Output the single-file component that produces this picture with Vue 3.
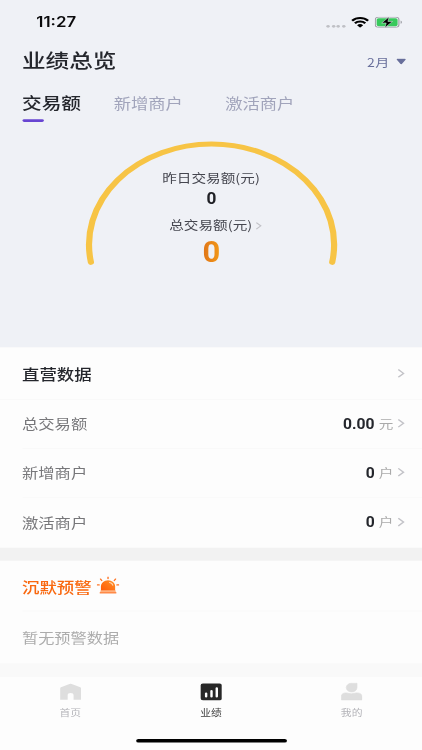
<script setup>
const tabs = ['交易额', '新增商户', '激活商户']
const rows = [
  { label: '总交易额', value: '0.00', unit: '元' },
  { label: '新增商户', value: '0', unit: '户' },
  { label: '激活商户', value: '0', unit: '户' },
]
</script>

<template>
  <div class="viewport">
    <div class="screen">
      <section class="hero">
        <div class="status">
          <span class="time">11:27</span>
          <div class="signals">
            <span class="dots"><i v-for="n in 4" :key="n"></i></span>
            <svg class="wifi" viewBox="0 0 16 12">
              <path d="M8 12 5.300 9.300a3.800 3.800 0 0 1 5.400 0Z" />
              <path d="M3.400 7.200a6.500 6.500 0 0 1 9.200 0M.9 4.400a10 10 0 0 1 14.200 0" fill="none" stroke="#000" stroke-width="2.200" />
            </svg>
            <svg class="battery" viewBox="0 0 25 12">
              <rect x=".5" y=".5" width="21" height="11" rx="3" fill="#eff1f6" stroke="#9b9da3" />
              <rect x="1.700" y="1.700" width="18.600" height="8.600" rx="1.800" fill="#38c95c" />
              <path d="M23 4.200v3.600c1.600-.6 1.600-3 0-3.600Z" fill="#9b9da3" />
              <path d="M12.800.2 6.200 6.900h4L9 12l6.800-6.800h-4.100Z" fill="#000" stroke="#eff1f6" stroke-width=".5" />
            </svg>
          </div>
        </div>
        <header class="title-row">
          <h1>业绩总览</h1>
          <div class="month">
            <span>2月</span>
            <svg viewBox="0 0 9 7"><path d="M1.200 1.200h6.600L4.500 5.800Z" fill="#686f9b" stroke="#686f9b" stroke-width="1.400" stroke-linejoin="round" /></svg>
          </div>
        </header>
        <nav class="tabs">
          <span v-for="(tab, i) in tabs" :key="tab" :class="['tab', { active: i === 0 }]">{{ tab }}</span>
        </nav>
        <div class="gauge">
          <svg class="arc" viewBox="0 0 226 140">
            <path d="M5.800 133A108.900 108.900 0 1 1 220.200 133" fill="none" stroke="#f7c445" stroke-width="5.500" stroke-linecap="round" />
          </svg>
          <div class="readout">
            <span class="caption">昨日交易额(元)</span>
            <b class="yesterday">0</b>
            <span class="caption total-caption">总交易额(元)<svg class="chevron small" viewBox="0 0 7 11"><path d="m1 1 5 4.500L1 10" /></svg></span>
            <b class="total">0</b>
          </div>
        </div>
      </section>

      <section class="card">
        <div class="row head">
          <h2>直营数据</h2>
          <svg class="chevron" viewBox="0 0 7 11"><path d="m1 1 5 4.500L1 10" /></svg>
        </div>
        <div v-for="row in rows" :key="row.label" class="row">
          <span class="label">{{ row.label }}</span>
          <b class="value">{{ row.value }}</b>
          <span class="unit">{{ row.unit }}</span>
          <svg class="chevron" viewBox="0 0 7 11"><path d="m1 1 5 4.500L1 10" /></svg>
        </div>
      </section>

      <section class="card alert">
        <div class="row alert-head">
          <h2>沉默预警</h2>
          <svg class="siren" viewBox="0 0 19 19">
            <defs>
              <linearGradient id="siren-fill" x1="0" y1="1" x2="1" y2="0">
                <stop offset="0" stop-color="#ff5b08" />
                <stop offset="1" stop-color="#ff9128" />
              </linearGradient>
            </defs>
            <path d="M3.500 14.700V10a6 6 0 0 1 12 0v4.700Z" fill="url(#siren-fill)" />
            <path d="M10.800 6.300q2.300.5 2.700 2.800" fill="none" stroke="#ffd9b8" stroke-width="1" stroke-linecap="round" />
            <path d="M3 15.300h13" stroke="#ffb17e" stroke-width="1.400" />
            <path d="M2.500 16.900h14" stroke="#ff8a48" stroke-width="1.400" />
            <path d="M9.500.8v1.500M3.200 2.800l1 1.500M15.800 2.800l-1 1.500M.5 8.800H2M17 8.800h1.500" stroke="#ff7424" stroke-width="1.200" stroke-linecap="round" />
          </svg>
        </div>
        <div class="row empty">暂无预警数据</div>
      </section>

      <nav class="tabbar">
        <div class="item">
          <svg viewBox="0 0 20 20"><path d="M1.200 5 9 1.300q1-.5 2 0L18.800 5q.7.400.7 1.200v12.700H12.700v-5a2.700 2.700 0 0 0-5.400 0v5H.5V6.200Q.5 5.400 1.200 5Z" fill="#dedede" /></svg>
          <span>首页</span>
        </div>
        <div class="item current">
          <svg viewBox="0 0 20 20"><rect x=".2" y=".8" width="19.600" height="18.600" rx="2.200" fill="#282828" /><path d="M5.300 12v3.200M10.200 9v6.200M15 6v9.200" stroke="#fff" stroke-width="2.200" stroke-linecap="round" /></svg>
          <span>业绩</span>
        </div>
        <div class="item">
          <svg viewBox="0 0 20 20"><path d="M9.800.4h4.800v4.800A4.900 4.900 0 1 1 9.800.4Z" fill="#dedede" stroke="#dedede" stroke-width=".6" stroke-linejoin="round" /><path d="M.3 19v-3.500q0-4.300 4.200-4.300 1.200 0 2.300.5 2.700 1 5.400 0 1.100-.5 2.300-.5 4.700 0 4.700 4.300V19Z" fill="#dedede" stroke="#dedede" stroke-width=".6" stroke-linejoin="round" /></svg>
          <span>我的</span>
        </div>
        <div class="home-indicator"></div>
      </nav>
    </div>
  </div>
</template>

<style>
body {
  margin: 0;
  overflow: hidden;
}
</style>

<style scoped>
.viewport {
  width: 422px;
  height: 750px;
  overflow: hidden;
}
/* The 375x812 layout is fitted to the viewport on both axes. */
.screen {
  display: flex;
  flex-direction: column;
  width: 375px;
  height: 812px;
  transform: scale(1.12534, 0.92365);
  transform-origin: 0 0;
  background: #f2f2f2;
  font-family: "Noto Sans CJK SC", sans-serif;
  color: #24262c;
}
.hero {
  display: flex;
  flex-direction: column;
  height: 376px;
  background: #eff1f6;
}
.status {
  display: flex;
  align-items: center;
  justify-content: space-between;
  height: 48px;
  padding: 0 17px 0 32.300px;
}
.time {
  font: 600 15px/20px Inter, sans-serif;
  color: #0b0b0d;
}
.signals {
  display: flex;
  align-items: center;
}
.dots {
  display: flex;
  gap: 1.700px;
  margin: 8px 5px 0 0;
}
.dots i {
  width: 3px;
  height: 3px;
  border-radius: 50%;
  background: #bfc0c5;
}
.wifi {
  width: 16px;
  height: 12px;
  margin-right: 5px;
}
.battery {
  width: 25px;
  height: 12px;
}
.title-row {
  display: flex;
  align-items: center;
  justify-content: space-between;
  height: 34px;
  padding: 0 14.500px 0 19.500px;
}
h1,
h2 {
  margin: 0;
  font-weight: 500;
}
h1 {
  font-size: 21px;
  line-height: 30px;
}
.month {
  display: flex;
  align-items: center;
  gap: 5px;
  padding-top: 2px;
  font-size: 12.500px;
  letter-spacing: 0.500px;
  color: #686f9b;
}
.month svg {
  width: 9px;
  height: 7px;
}
.tabs {
  display: flex;
  height: 49px;
  padding-left: 19.500px;
}
.tab {
  display: flex;
  align-items: center;
  height: 57px;
  margin-right: 37.500px;
  font-size: 15.400px;
  color: #a1a4bb;
}
.tab.active {
  position: relative;
  margin-right: 29px;
  font-size: 17.500px;
  font-weight: 500;
  color: #24262c;
}
.tab.active::after {
  content: "";
  position: absolute;
  left: 0;
  bottom: 7.500px;
  width: 19px;
  height: 2.800px;
  border-radius: 2px;
  background: #6845d2;
}
.gauge {
  display: grid;
  justify-content: center;
  padding-top: 19.500px;
}
.arc,
.readout {
  grid-area: 1 / 1;
}
.arc {
  width: 226px;
  height: 140px;
}
.readout {
  display: flex;
  flex-direction: column;
  align-items: center;
  padding-top: 32px;
}
.caption {
  font-size: 13px;
  line-height: 20px;
  color: #45464f;
}
.yesterday {
  padding-top: 1px;
  font: 700 17px/22px Roboto, sans-serif;
  color: #202126;
  transform: scaleX(0.9);
}
.total-caption {
  display: flex;
  align-items: center;
  gap: 3px;
  margin: 8.500px 0 0 8px;
}
.total {
  padding-top: 1.500px;
  font: 700 31px/36px Roboto, sans-serif;
  background: linear-gradient(90deg, #df7418, #f39a18);
  background-clip: text;
  color: transparent;
  transform: scaleX(0.89);
}
.chevron {
  width: 6.500px;
  height: 10.500px;
  fill: none;
  stroke: #c3c3c8;
  stroke-width: 1.500;
}
.chevron.small {
  width: 5.500px;
  height: 9px;
}
.card {
  background: #fdfdfd;
}
.row {
  display: flex;
  align-items: center;
  box-sizing: border-box;
  height: 53px;
  margin-left: 19.500px;
  padding-right: 15.500px;
  border-bottom: 1px solid #f9f9f9;
}
.row:last-child {
  height: 54px;
  border: 0;
}
.row.head {
  justify-content: space-between;
  height: 56.500px;
  margin: 0;
  padding-left: 19.500px;
}
h2 {
  font-size: 15.500px;
}
.label {
  margin-right: auto;
  font-size: 14.500px;
  color: #77777a;
}
.value {
  padding-top: 1px;
  font: 700 15.800px/20px Roboto, sans-serif;
  transform: scaleX(0.88);
  transform-origin: 100% 50%;
}
.unit {
  margin: 0 3.500px;
  font-size: 13px;
  color: #aaa;
}
.alert {
  margin-top: 14.500px;
}
.alert-head {
  gap: 4.500px;
  height: 55px;
  padding-top: 1px;
  color: #f9680f;
}
.siren {
  width: 20px;
  height: 20px;
  margin-top: -1px;
}
.row.empty {
  height: 55.500px;
  font-size: 14.400px;
  color: #acacac;
}
.tabbar {
  display: grid;
  grid-template-columns: repeat(3, 1fr);
  align-content: start;
  flex: 1;
  background: #fdfdfd;
  border-top: 15px solid #f9f9f9;
}
.item {
  display: flex;
  flex-direction: column;
  align-items: center;
  gap: 5px;
  padding-top: 6px;
  font-size: 9.600px;
  line-height: 14px;
  color: #b3b3b8;
}
.item svg {
  width: 19.500px;
  height: 20px;
}
.item.current {
  color: #3d3d3d;
}
.home-indicator {
  grid-column: 1 / -1;
  justify-self: center;
  width: 134px;
  height: 4.500px;
  margin-top: 22px;
  border-radius: 3px;
  background: #000;
}
</style>
